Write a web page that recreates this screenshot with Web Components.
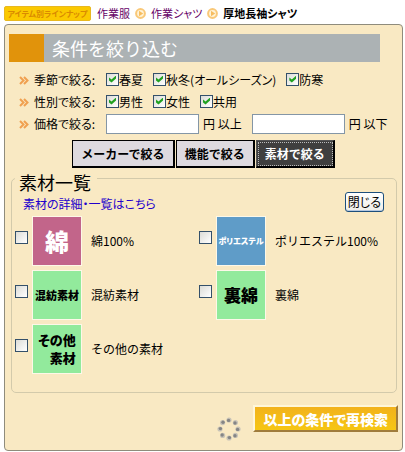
<!DOCTYPE html>
<html lang="ja">
<head>
<meta charset="UTF-8">
<meta name="viewport" content="width=device-width, initial-scale=1">
<title>厚地長袖シャツ</title>
<style>
  body {
    margin: 5px 2px 3px 4px;
    background: #fff;
    color: #000;
    font-family: "Noto Sans CJK JP", "Liberation Sans", sans-serif;
    font-size: 12px;
    line-height: 16px;
    font-feature-settings: "palt";
  }
</style>
</head>
<body>
<crumb-trail>
  <crumb-link href="#wear">作業服</crumb-link>
  <crumb-link href="#shirts">作業シャツ</crumb-link>
  <span slot="current">厚地長袖シャツ</span>
</crumb-trail>

<filter-panel>
  <span slot="title">条件を絞り込む</span>

  <filter-row slot="filters" label="季節で絞る:">
    <check-option checked>春夏</check-option>
    <check-option checked>秋冬(オールシーズン)</check-option>
    <check-option checked>防寒</check-option>
  </filter-row>
  <filter-row slot="filters" label="性別で絞る:">
    <check-option checked>男性</check-option>
    <check-option checked>女性</check-option>
    <check-option checked>共用</check-option>
  </filter-row>
  <filter-row slot="filters" label="価格で絞る:">
    <price-field>円 以上</price-field>
    <price-field>円 以下</price-field>
  </filter-row>

  <tab-button slot="tabs">メーカーで絞る</tab-button>
  <tab-button slot="tabs">機能で絞る</tab-button>
  <tab-button slot="tabs" active>素材で絞る</tab-button>

  <material-list>
    <span slot="title">素材一覧</span>
    <span slot="link">素材の詳細・一覧はこちら</span>
    <material-item name="綿100%" tone="rose" size="large">綿</material-item>
    <material-item name="ポリエステル100%" tone="blue" size="tiny">ポリエステル</material-item>
    <material-item name="混紡素材" size="small">混紡素材</material-item>
    <material-item name="裏綿" size="medium">裏綿</material-item>
    <material-item name="その他の素材" size="normal">その他<br>素材</material-item>
  </material-list>

  <loading-ring slot="actions"></loading-ring>
  <search-button slot="actions">以上の条件で再検索</search-button>
</filter-panel>

<script>
class CrumbTrail extends HTMLElement {
  connectedCallback() {
    this.attachShadow({ mode: 'open' });
    this.shadowRoot.innerHTML = `
      <style>
        :host {
          display: block;
          font-size: 11px;
        }

        nav {
          display: flex;
          align-items: center;
          gap: 5px;
          white-space: nowrap;
        }

        .badge {
          box-sizing: border-box;
          width: 87px;
          height: 15px;
          margin-right: 1px;
          border: 1px solid #e8b820;
          border-radius: 2px;
          background: #fbc900;
          color: #d98a00;
          font-size: 8px;
          font-weight: 700;
          line-height: 13px;
          text-align: center;
        }

        ::slotted([slot="current"]) {
          font-weight: 700;
        }
      </style>
      <nav>
        <span class="badge">アイテム別ラインナップ</span>
        <slot></slot>
        <slot name="current"></slot>
      </nav>
    `;
  }
}

class CrumbLink extends HTMLElement {
  connectedCallback() {
    this.attachShadow({ mode: 'open' });
    this.shadowRoot.innerHTML = `
      <style>
        :host {
          display: flex;
          align-items: center;
          gap: 5px;
        }

        a {
          color: #660066;
          text-decoration: none;
        }

        svg {
          display: block;
        }
      </style>
      <a href="${this.getAttribute('href')}"><slot></slot></a>
      <svg width="11" height="11" viewBox="0 0 11 11" aria-hidden="true">
        <circle cx="5.5" cy="5.5" r="4.4" fill="#fff3d6" stroke="#f9c878" stroke-width="2"/>
        <path d="M4 2.8 8.2 5.5 4 8.2z" fill="#f7bd60"/>
      </svg>
    `;
  }
}

class FilterPanel extends HTMLElement {
  connectedCallback() {
    this.attachShadow({ mode: 'open' });
    this.shadowRoot.innerHTML = `
      <style>
        :host {
          display: block;
          margin-top: 3px;
          padding: 9px 4px 9px;
          border: 1px solid #8f8c7c;
          border-radius: 4px;
          background: #f9e9c3;
        }

        h1 {
          margin: 0 18px 0 0;
          padding-left: 8px;
          border-left: 35px solid #e1930b;
          background: #acb2b4;
          color: #fff;
          font-size: 18px;
          font-weight: 400;
          line-height: 28px;
          font-feature-settings: normal;
        }

        .filters {
          display: grid;
          gap: 2px;
          margin: 8px 0 6px 10px;
        }

        .tabs {
          display: flex;
          justify-content: center;
          gap: 1px;
        }

        .actions {
          display: flex;
          justify-content: flex-end;
          gap: 12px;
          height: 36px;
          margin-top: 12px;
        }
      </style>
      <h1><slot name="title"></slot></h1>
      <div class="filters"><slot name="filters"></slot></div>
      <div class="tabs"><slot name="tabs"></slot></div>
      <slot></slot>
      <div class="actions"><slot name="actions"></slot></div>
    `;
  }
}

class FilterRow extends HTMLElement {
  connectedCallback() {
    this.attachShadow({ mode: 'open' });
    this.shadowRoot.innerHTML = `
      <style>
        :host {
          display: flex;
          align-items: center;
          height: 20px;
          white-space: nowrap;
        }

        svg {
          flex: none;
          margin-right: 5px;
        }

        .label {
          flex: none;
          width: 72px;
        }

        .options {
          display: flex;
          gap: 10px;
        }
      </style>
      <svg width="10" height="9" viewBox="0 0 10 9" fill="none" stroke="#f0a050" stroke-width="2" aria-hidden="true">
        <path d="M1 1 4.5 4.5 1 8M5 1 8.5 4.5 5 8"/>
      </svg>
      <span class="label" id="label">${this.getAttribute('label')}</span>
      <div class="options" role="group" aria-labelledby="label"><slot></slot></div>
    `;
  }
}

// shared by the filter rows and the material list
const checkboxStyle = `
  input {
    appearance: none;
    flex: none;
    box-sizing: border-box;
    width: 13px;
    height: 13px;
    margin: 0;
    border: 1px solid #34506a;
    background: linear-gradient(135deg, #dcdcd7, #fff);
  }

  input:checked::before {
    content: "";
    display: block;
    width: 7px;
    height: 7px;
    margin: 2px;
    background: #21a121;
    clip-path: polygon(0 29%, 36% 58%, 100% 0, 100% 42%, 36% 100%, 0 71%);
  }
`;

class CheckOption extends HTMLElement {
  connectedCallback() {
    this.attachShadow({ mode: 'open' });
    this.shadowRoot.innerHTML = `
      <style>
        :host {
          display: block;
        }

        label {
          display: flex;
          align-items: center;
        }

        ${checkboxStyle}

        input {
          margin-bottom: 2px;
        }
      </style>
      <label>
        <input type="checkbox" ${this.hasAttribute('checked') ? 'checked' : ''}>
        <span><slot></slot></span>
      </label>
    `;
  }
}

class PriceField extends HTMLElement {
  connectedCallback() {
    this.attachShadow({ mode: 'open' });
    this.shadowRoot.innerHTML = `
      <style>
        :host {
          display: block;
        }

        label {
          display: flex;
          align-items: center;
          gap: 4px;
        }

        input {
          box-sizing: border-box;
          width: 93px;
          height: 20px;
          padding: 0 3px;
          border: 1px solid #8496a6;
          background: #fff;
          font: inherit;
        }
      </style>
      <label>
        <input type="text" inputmode="numeric">
        <span><slot></slot></span>
      </label>
    `;
  }
}

class TabButton extends HTMLElement {
  connectedCallback() {
    this.attachShadow({ mode: 'open' });
    this.shadowRoot.innerHTML = `
      <style>
        :host {
          display: block;
        }

        button {
          display: block;
          height: 28px;
          padding: 0 8px;
          border: 1px solid #000;
          border-right-width: 2px;
          border-bottom-width: 2px;
          background: #dedadf;
          color: #000;
          font: inherit;
          font-weight: 700;
          font-feature-settings: normal;
          white-space: nowrap;
        }

        :host([active]) button {
          border-color: #555 #000 #000 #555;
          background: #3f3f3f;
          color: #fff;
          outline: 1px dotted #bbb;
          outline-offset: -3px;
        }
      </style>
      <button type="button"><slot></slot></button>
    `;
  }
}

class MaterialList extends HTMLElement {
  connectedCallback() {
    this.attachShadow({ mode: 'open' });
    this.shadowRoot.innerHTML = `
      <style>
        :host {
          display: block;
          margin: 0 1px 0 2px;
        }

        fieldset {
          min-width: 0;
          margin: 0;
          padding: 0 3px 18px;
          border: 1px solid #d3caab;
          border-radius: 5px;
        }

        /* top padding drops the text below the border line */
        legend {
          padding: 8px 6px 0 4px;
          font-size: 18px;
          line-height: 12px;
          font-feature-settings: normal;
        }

        .head {
          display: flex;
          align-items: flex-end;
          justify-content: space-between;
          height: 24px;
          padding: 0 9px 4px 8px;
        }

        a {
          color: #2200cc;
          text-decoration: none;
        }

        .head button {
          height: 20px;
          padding: 0 2px;
          border: 1px solid #1d4f7c;
          border-radius: 3px;
          background: linear-gradient(#fff, #efeee8);
          box-shadow: inset 0 -1px #b5c8e0;
          color: #000;
          font: inherit;
          line-height: 16px;
          white-space: nowrap;
        }

        .grid {
          display: grid;
          grid-template-columns: 184px 1fr;
          row-gap: 4px;
        }
      </style>
      <fieldset>
        <legend><slot name="title"></slot></legend>
        <div class="head">
          <a href="#materials"><slot name="link"></slot></a>
          <button type="button">閉じる</button>
        </div>
        <div class="grid"><slot></slot></div>
      </fieldset>
    `;
  }
}

class MaterialItem extends HTMLElement {
  connectedCallback() {
    this.attachShadow({ mode: 'open' });
    this.shadowRoot.innerHTML = `
      <style>
        :host {
          display: block;
        }

        label {
          display: flex;
          align-items: center;
          white-space: nowrap;
        }

        ${checkboxStyle}

        input {
          margin: 0 4px 8px 0;
        }

        .tile {
          display: flex;
          align-items: center;
          justify-content: center;
          width: 48px;
          height: 48px;
          margin-right: 9px;
          border: 1px solid #fdf8e8;
          background: #92ea9c;
          color: #000;
          font-weight: 900;
          text-align: right;
        }

        .name {
          font-feature-settings: normal;
        }

        :host([tone="rose"]) .tile {
          background: #c2658a;
          color: #fff;
        }

        :host([tone="blue"]) .tile {
          background: #5f9cc8;
          color: #fff;
        }

        :host([size="tiny"]) .tile { font-size: 8px; }
        :host([size="small"]) .tile { font-size: 11px; }
        :host([size="normal"]) .tile { font-size: 13px; line-height: 18px; }
        :host([size="medium"]) .tile { font-size: 17px; }
        :host([size="large"]) .tile { font-size: 24px; }
      </style>
      <label>
        <input type="checkbox">
        <span class="tile"><span><slot></slot></span></span>
        <span class="name">${this.getAttribute('name')}</span>
      </label>
    `;
  }
}

class LoadingRing extends HTMLElement {
  connectedCallback() {
    this.attachShadow({ mode: 'open' });
    this.shadowRoot.innerHTML = `
      <style>
        :host {
          display: block;
          align-self: flex-end;
        }

        svg {
          display: block;
        }
      </style>
      <svg width="24" height="24" viewBox="0 0 24 24" role="img" aria-label="読み込み中">
        <g fill="#c9c4b8">
          <circle cx="12" cy="3" r="2.6"/>
          <circle cx="18.4" cy="5.6" r="2.6"/>
          <circle cx="21" cy="12" r="2.6"/>
          <circle cx="18.4" cy="18.4" r="2.6"/>
          <circle cx="12" cy="21" r="2.6"/>
          <circle cx="5.6" cy="18.4" r="2.6"/>
          <circle cx="3" cy="12" r="2.6"/>
          <circle cx="5.6" cy="5.6" r="2.6"/>
        </g>
        <g fill="#858585">
          <circle cx="11.6" cy="3.4" r="1.7"/>
          <circle cx="18" cy="6" r="1.7"/>
          <circle cx="20.6" cy="12.4" r="1.7"/>
          <circle cx="18" cy="18.8" r="1.7"/>
          <circle cx="12.4" cy="20.6" r="1.7"/>
          <circle cx="5.2" cy="18" r="1.7"/>
          <circle cx="3.4" cy="11.6" r="1.7"/>
          <circle cx="6" cy="5.2" r="1.7"/>
        </g>
      </svg>
    `;
  }
}

class SearchButton extends HTMLElement {
  connectedCallback() {
    this.attachShadow({ mode: 'open' });
    this.shadowRoot.innerHTML = `
      <style>
        :host {
          display: block;
        }

        button {
          display: block;
          height: 27px;
          padding: 0 8px;
          border: 2px solid;
          border-color: #fff6d8 #a07c3c #a07c3c #fff6d8;
          background: linear-gradient(#f2b21c, #f6c613);
          color: #fff;
          font: inherit;
          font-size: 14px;
          font-weight: 900;
          line-height: 20px;
          white-space: nowrap;
        }
      </style>
      <button type="submit"><slot></slot></button>
    `;
  }
}

customElements.define('crumb-trail', CrumbTrail);
customElements.define('crumb-link', CrumbLink);
customElements.define('filter-panel', FilterPanel);
customElements.define('filter-row', FilterRow);
customElements.define('check-option', CheckOption);
customElements.define('price-field', PriceField);
customElements.define('tab-button', TabButton);
customElements.define('material-list', MaterialList);
customElements.define('material-item', MaterialItem);
customElements.define('loading-ring', LoadingRing);
customElements.define('search-button', SearchButton);
</script>
</body>
</html>
